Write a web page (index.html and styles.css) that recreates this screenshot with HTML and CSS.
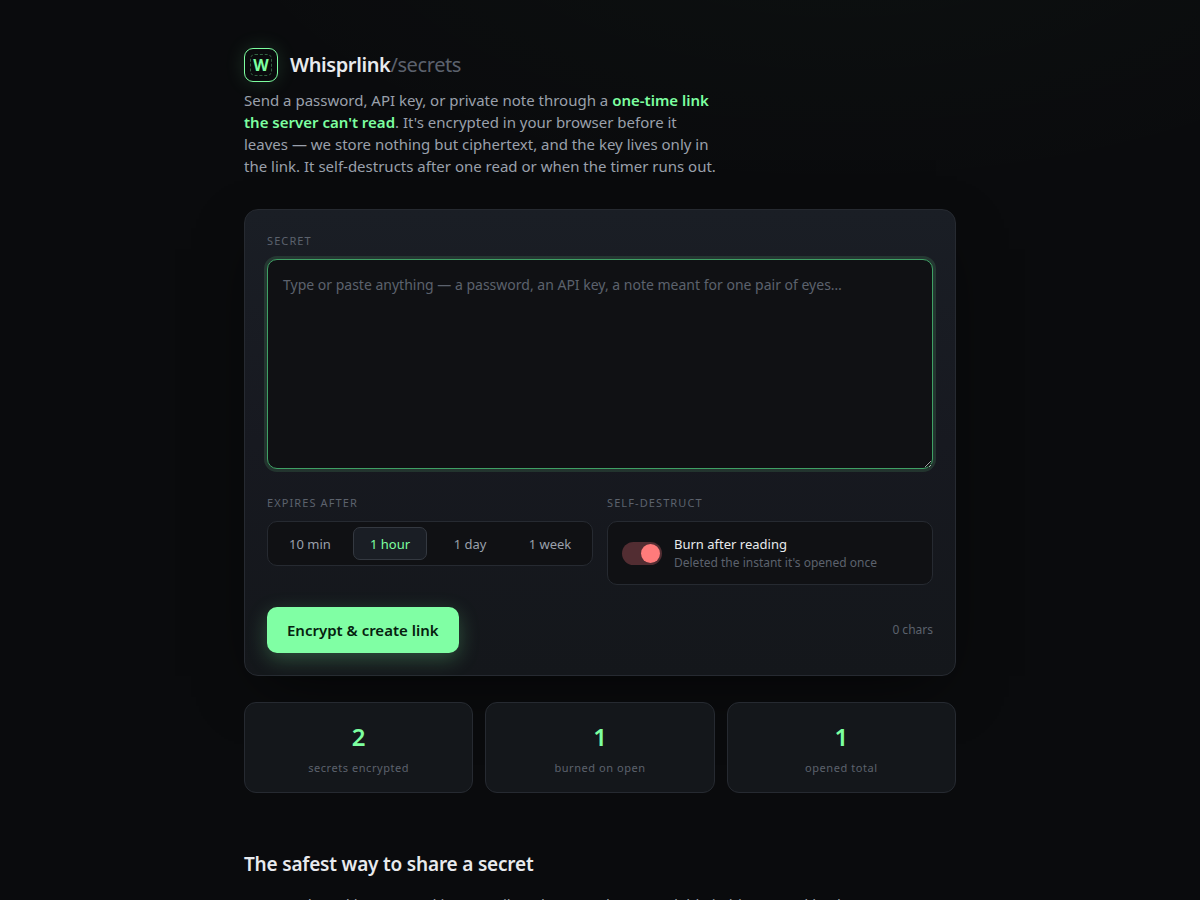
FILE: index.html
```html
<!DOCTYPE html>
<html lang="en">
<head>
<meta charset="utf-8">
<meta name="viewport" content="width=device-width, initial-scale=1">
<title>Whisprlink/secrets</title>
<link rel="stylesheet" href="styles.css">
</head>
<body>
<div class="wrap">
  <header class="header">
    <div class="brand">
      <span class="logo">W</span>
      <h1 class="brand-name">Whisprlink<span class="brand-sub">/secrets</span></h1>
    </div>
    <p class="lede">Send a password, API key, or private note through a <strong>one-time link the server can't read</strong>. It's encrypted in your browser before it leaves — we store nothing but ciphertext, and the key lives only in the link. It self-destructs after one read or when the timer runs out.</p>
  </header>

  <main>
    <form class="card">
      <label class="label" for="secret">Secret</label>
      <textarea class="secret" id="secret" placeholder="Type or paste anything — a password, an API key, a note meant for one pair of eyes…"></textarea>
      <div class="options">
        <div>
          <span class="label" id="expiry-label">Expires after</span>
          <div class="segments" role="group" aria-labelledby="expiry-label">
            <button class="segment" type="button">10 min</button>
            <button class="segment active" type="button" aria-pressed="true">1 hour</button>
            <button class="segment" type="button">1 day</button>
            <button class="segment" type="button">1 week</button>
          </div>
        </div>
        <div>
          <span class="label">Self-destruct</span>
          <label class="burn" for="burn">
            <input class="switch" id="burn" type="checkbox" checked>
            <span class="burn-text">
              <span class="burn-title">Burn after reading</span>
              <span class="burn-note">Deleted the instant it's opened once</span>
            </span>
          </label>
        </div>
      </div>
      <div class="actions">
        <button class="submit" type="submit">Encrypt &amp; create link</button>
        <span class="count">0 chars</span>
      </div>
    </form>

    <section class="stats" aria-label="Statistics">
      <div class="stat"><span class="stat-value">2</span><span class="stat-name">secrets encrypted</span></div>
      <div class="stat"><span class="stat-value">1</span><span class="stat-name">burned on open</span></div>
      <div class="stat"><span class="stat-value">1</span><span class="stat-name">opened total</span></div>
    </section>

    <section class="about">
      <h2>The safest way to share a secret</h2>
      <p>Passwords and keys pasted into email or chat stay there, readable in history and backups.</p>
    </section>
  </main>
</div>
</body>
</html>
```

FILE: styles.css
```css
* {
  box-sizing: border-box;
}

html {
  background: #0a0b0d;
  overflow-x: hidden;
  scrollbar-width: none;
}

body {
  --green: #7dffa0;
  --muted: #9aa0ab;
  --faint: #5c626d;
  --line: #262a31;
  --field: #101114;
  margin: 0;
  min-height: 100vh;
  color: #e8eaed;
  font: 15px/22px "Noto Sans", sans-serif;
  background: radial-gradient(1100px 500px at 70% -10%, rgba(125, 255, 160, 0.025), transparent 60%), #0a0b0d;
}

.wrap {
  max-width: 760px;
  margin: 0 auto;
  padding: 48px 24px 80px;
}

.brand {
  display: flex;
  align-items: center;
  gap: 12px;
  margin-bottom: 7px;
}

.logo {
  position: relative;
  display: grid;
  place-items: center;
  width: 34px;
  height: 34px;
  border: 1px solid var(--green);
  border-radius: 9px;
  color: var(--green);
  font-size: 16px;
  font-weight: 700;
  box-shadow: 0 0 20px rgba(125, 255, 160, 0.14);
}

.logo::after {
  content: "";
  position: absolute;
  inset: 5px;
  border: 1px dashed rgba(125, 255, 160, 0.35);
  border-radius: 5px;
}

.brand-name {
  margin: 0;
  font-size: 20px;
  font-weight: 600;
  line-height: 32px;
  letter-spacing: -0.02em;
}

.brand-sub {
  color: var(--faint);
  font-weight: 400;
}

.lede {
  max-width: 474px;
  margin: 0;
  color: var(--muted);
}

.lede strong {
  color: var(--green);
  font-weight: 600;
}

.card {
  margin-top: 32px;
  padding: 22px;
  border: 1px solid var(--line);
  border-radius: 14px;
  background: linear-gradient(180deg, #1a1e25, #171920 50%, #14171b);
  box-shadow: 0 20px 60px -20px rgba(0, 0, 0, 0.7);
}

.label {
  display: block;
  margin-bottom: 10px;
  color: var(--faint);
  font-size: 11px;
  line-height: 17px;
  letter-spacing: 0.1em;
  text-transform: uppercase;
}

.secret {
  display: block;
  width: 100%;
  height: 210px;
  padding: 14px 15px;
  border: 1px solid #3fa065;
  border-radius: 10px;
  outline: none;
  background: var(--field);
  color: #e8eaed;
  font: 14px/22px "Noto Sans", sans-serif;
  box-shadow: 0 0 0 3px rgba(125, 255, 160, 0.12);
  resize: vertical;
}

.secret::placeholder {
  color: var(--faint);
}

.options {
  display: grid;
  grid-template-columns: 1fr 1fr;
  align-items: start;
  gap: 14px;
  margin-top: 25px;
}

.segments {
  display: grid;
  grid-template-columns: repeat(4, 1fr);
  gap: 6px;
  padding: 5px;
  border: 1px solid var(--line);
  border-radius: 10px;
  background: var(--field);
}

.segment {
  padding: 0;
  height: 33px;
  border: 1px solid transparent;
  border-radius: 7px;
  background: none;
  color: var(--muted);
  font: 13px/18px "Noto Sans", sans-serif;
}

.segment.active {
  border-color: #343941;
  background: #1a1e25;
  color: var(--green);
}

.burn {
  display: flex;
  align-items: center;
  gap: 12px;
  padding: 12px 14px;
  border: 1px solid var(--line);
  border-radius: 10px;
  background: var(--field);
}

.switch {
  appearance: none;
  position: relative;
  flex: none;
  width: 40px;
  height: 23px;
  margin: 0;
  border-radius: 12px;
  background: #2a2e36;
}

.switch::before {
  content: "";
  position: absolute;
  top: 2px;
  left: 2px;
  width: 19px;
  height: 19px;
  border-radius: 50%;
  background: #9aa0ab;
}

.switch:checked {
  background: #522d32;
}

.switch:checked::before {
  left: 19px;
  background: #ff7b7b;
}

.burn-title,
.burn-note {
  display: block;
}

.burn-title {
  font-size: 13px;
  line-height: 20px;
}

.burn-note {
  color: var(--faint);
  font-size: 12px;
  line-height: 18px;
}

.actions {
  display: flex;
  align-items: center;
  justify-content: space-between;
  margin-top: 22px;
}

.submit {
  padding: 12px 20px;
  border: 0;
  border-radius: 10px;
  background: #80ffa4;
  color: #06210f;
  font: 600 15px/22px "Noto Sans", sans-serif;
  box-shadow: 0 6px 20px rgba(125, 255, 160, 0.25);
}

.count {
  color: var(--faint);
  font-size: 12px;
}

.stats {
  display: grid;
  grid-template-columns: repeat(3, 1fr);
  gap: 12px;
  margin-top: 26px;
}

.stat {
  padding: 16px;
  border: 1px solid var(--line);
  border-radius: 12px;
  background: #14171b;
  text-align: center;
}

.stat-value,
.stat-name {
  display: block;
}

.stat-value {
  color: var(--green);
  font-size: 24px;
  font-weight: 600;
  line-height: 36px;
}

.stat-name {
  margin-top: 4px;
  color: var(--faint);
  font-size: 11px;
  line-height: 17px;
  letter-spacing: 0.05em;
}

.about {
  margin-top: 56px;
}

.about h2 {
  margin: 0 0 14px;
  font-size: 19px;
  font-weight: 600;
  line-height: 30px;
  letter-spacing: -0.01em;
}

.about p {
  margin: 0;
  color: var(--muted);
}
```
